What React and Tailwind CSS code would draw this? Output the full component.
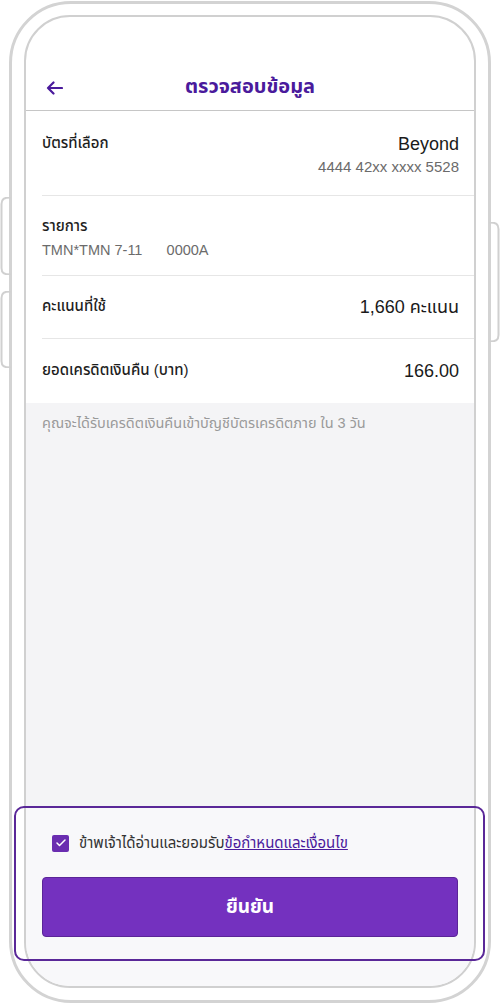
import React from "react";
import { Check } from "lucide-react";

const font = { fontFamily: '"Liberation Sans", "Noto Sans Thai", "Noto Sans", sans-serif' };

// little bracket drawn outside the phone edge for a hardware button
const SideButton = ({ side, top, height }) => {
  const left = side === "left";
  return (
    <svg
      className={`absolute ${left ? "left-0" : "right-0"}`}
      style={{ top, height }}
      width="11"
      height={height}
      viewBox={`0 0 11 ${height}`}
      fill="none"
    >
      {left ? (
        <path
          d={`M10.5 0.5 C4 0.5 1.5 2 1.5 7 L1.5 ${height - 7} C1.5 ${height - 2} 4 ${height - 0.5} 10.5 ${height - 0.5}`}
          stroke="#d0d0d0"
          strokeWidth="2"
        />
      ) : (
        <path
          d={`M0.5 0.5 C7 0.5 9.5 2 9.5 7 L9.5 ${height - 7} C9.5 ${height - 2} 7 ${height - 0.5} 0.5 ${height - 0.5}`}
          stroke="#d0d0d0"
          strokeWidth="2"
        />
      )}
    </svg>
  );
};

const Row = ({ label, value, sub, className }) => (
  <div className={`ml-4 pr-[15px] border-b border-[#e6e6e6] flex justify-between ${className}`}>
    <div>
      <div className="text-[15px] leading-[20px] font-medium text-[#1e1e1e]">{label}</div>
      {sub && !value && (
        <div className="mt-[4px] text-[14.5px] leading-[20px] text-[#6b6b6b] whitespace-pre">{sub}</div>
      )}
    </div>
    {value && (
      <div className="text-right">
        <div className="text-[18px] leading-[22px] text-[#1a1a1a]">{value}</div>
        {sub && <div className="mt-[2px] text-[15px] leading-[20px] text-[#6b6b6b]">{sub}</div>}
      </div>
    )}
  </div>
);

export default function App() {
  return (
    <div className="relative w-[500px] h-[1004px] bg-white overflow-hidden" style={font}>
      <SideButton side="left" top={197} height={78} />
      <SideButton side="left" top={291} height={77} />
      <SideButton side="right" top={222} height={120} />

      {/* phone body */}
      <div className="ml-[9px] mt-[1px] w-[482px] h-[1002px] border-[3px] border-[#d3d3d3] rounded-[62px] pt-[11px] px-[12px]">
        <div className="w-[452px] h-[973px] border-2 border-[#d0d0d0] rounded-[46px] overflow-hidden flex flex-col">
          {/* header */}
          <div className="h-[94px] shrink-0 border-b-[1.5px] border-[#c6c6c6] flex items-end pb-[8px] px-[20px] relative">
            <svg width="17" height="14" viewBox="0 0 17 14" fill="none" className="mb-[7px]">
              <path d="M16 7H2M7.5 1.5L2 7l5.5 5.5" stroke="#4a1a9c" strokeWidth="2.2" strokeLinecap="round" strokeLinejoin="round" />
            </svg>
            <div className="absolute left-0 right-0 bottom-[10px] text-center text-[20px] leading-[28px] font-bold text-[#4a1a9c]">
              ตรวจสอบข้อมูล
            </div>
          </div>

          <Row label="บัตรที่เลือก" value="Beyond" sub="4444 42xx xxxx 5528" className="h-[85px] pt-[22px]" />
          <Row label="รายการ" sub={"TMN*TMN 7-11      0000A"} className="h-[80px] pt-[20px]" />
          <Row label="คะแนนที่ใช้" value="1,660 คะแนน" className="h-[63px] pt-[20px] items-start" />
          <Row label="ยอดเครดิตเงินคืน (บาท)" value="166.00" className="h-[64px] pt-[21px] border-b-0" />

          <div className="flex-1 bg-[#f4f4f6] px-4 pt-[11px]">
            <div className="text-[14.5px] leading-[18px] text-[#9a9a9a]">
              คุณจะได้รับเครดิตเงินคืนเข้าบัญชีบัตรเครดิตภาย ใน 3 วัน
            </div>
          </div>

          {/* bottom action panel */}
          <div className="h-[178px] shrink-0 bg-[#f8f8fa] px-4 pt-[25px]">
            <div className="flex items-center gap-[10px] pl-[10px]">
              <div className="w-[17px] h-[17px] rounded-[2px] bg-[#6a2db0] flex items-center justify-center">
                <Check size={12} strokeWidth={3} color="white" />
              </div>
              <div className="text-[15px] leading-[20px] text-[#333]">
                ข้าพเจ้าได้อ่านและยอมรับ
                <span className="text-[#4a1a9c] underline">ข้อกำหนดและเงื่อนไข</span>
              </div>
            </div>
            <button className="mt-[24px] w-full h-[60px] rounded-[4px] bg-[#7431bf] border border-[#5b2597] text-white text-[19px] font-bold">
              ยืนยัน
            </button>
          </div>
        </div>
      </div>

      {/* highlight outline over the action panel */}
      <div className="absolute left-[14px] top-[806px] w-[471px] h-[155px] border-2 border-[#5a2898] rounded-[10px] pointer-events-none" />
    </div>
  );
}
